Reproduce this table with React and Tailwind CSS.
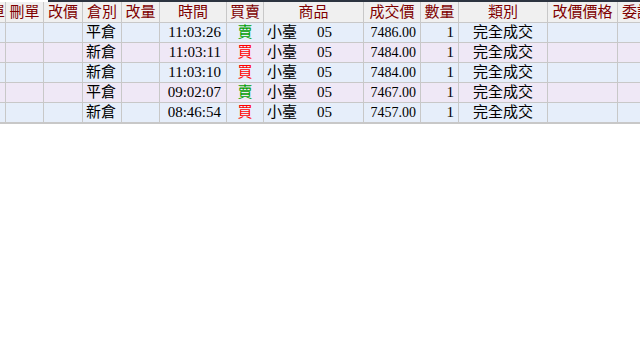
import React from "react";

const cols = [
  { key: "x", title: "單", w: "w-[6px]", align: "justify-end" },
  { key: "del", title: "刪單", w: "w-[38px]", align: "justify-center" },
  { key: "chgp", title: "改價", w: "w-[39px]", align: "justify-center" },
  { key: "pos", title: "倉別", w: "w-[39px]", align: "justify-start pl-[3px]" },
  { key: "chgq", title: "改量", w: "w-[38px]", align: "justify-center" },
  { key: "time", title: "時間", w: "w-[67px]", align: "justify-end pr-[5px]" },
  { key: "side", title: "買賣", w: "w-[37px]", align: "justify-center" },
  { key: "prod", title: "商品", w: "w-[100px]", align: "justify-start pl-[3px]" },
  { key: "price", title: "成交價", w: "w-[57px]", align: "justify-end pr-[4px]" },
  { key: "qty", title: "數量", w: "w-[38px]", align: "justify-end pr-[4px]" },
  { key: "type", title: "類別", w: "w-[89px]", align: "justify-center" },
  { key: "newp", title: "改價價格", w: "w-[70px]", align: "justify-center" },
  { key: "ord", title: "委託書號", w: "w-[80px]", align: "justify-start pl-[2px]" },
];

const rows = [
  { pos: "平倉", time: "11:03:26", side: "賣", price: "7486.00" },
  { pos: "新倉", time: "11:03:11", side: "買", price: "7484.00" },
  { pos: "新倉", time: "11:03:10", side: "買", price: "7484.00" },
  { pos: "平倉", time: "09:02:07", side: "賣", price: "7467.00" },
  { pos: "新倉", time: "08:46:54", side: "買", price: "7457.00" },
];

const cellValue = (key, r) => {
  switch (key) {
    case "pos":
      return <span className="text-[15px]">{r.pos}</span>;
    case "time":
      return <span className="text-[15px]">{r.time}</span>;
    case "side":
      return (
        <span className={`text-[15px] ${r.side === "賣" ? "text-[#00a000]" : "text-[#ff0000]"}`}>
          {r.side}
        </span>
      );
    case "prod":
      return (
        <span className="flex items-center">
          <span className="text-[15px] w-[50px]">小臺</span>
          <span className="text-[15px]">05</span>
        </span>
      );
    case "price":
      return r.price;
    case "qty":
      return <span className="text-[15px]">1</span>;
    case "type":
      return <span className="text-[15px]">完全成交</span>;
    default:
      return "";
  }
};

export default function App() {
  return (
    <div className="w-[640px] h-[350px] bg-white overflow-hidden font-['Liberation_Serif','Noto_Sans_CJK_TC',serif]">
      <div className="flex h-[2px]">
        <div className="w-[48px] bg-white" />
        <div className="flex-1 bg-[#2c3440]" />
      </div>
      <div className="flex flex-nowrap h-[21px] bg-[#f0f0f0] border-b border-[#c8c8c8]">
        {cols.map((c) => (
          <div
            key={c.key}
            className={`${c.w} shrink-0 overflow-hidden whitespace-nowrap flex items-center border-r border-[#c8c8c8] text-[15px] text-[#800000] ${
              c.key === "x" ? "justify-end" : c.key === "ord" ? "justify-start pl-[4px]" : "justify-center"
            }`}
          >
            {c.title}
          </div>
        ))}
      </div>
      {rows.map((r, i) => (
        <div
          key={i}
          className={`flex flex-nowrap h-[20px] border-b border-[#c8c8c8] ${
            i % 2 === 0 ? "bg-[#e6eefa]" : "bg-[#efe8f6]"
          }`}
        >
          {cols.map((c) => (
            <div
              key={c.key}
              className={`${c.w} shrink-0 overflow-hidden whitespace-nowrap flex items-center border-r border-[#c8c8c8] text-[14px] text-black ${c.align}`}
            >
              {cellValue(c.key, r)}
            </div>
          ))}
        </div>
      ))}
      <div className="h-[1px] bg-[#c8c8c8]" />
    </div>
  );
}
